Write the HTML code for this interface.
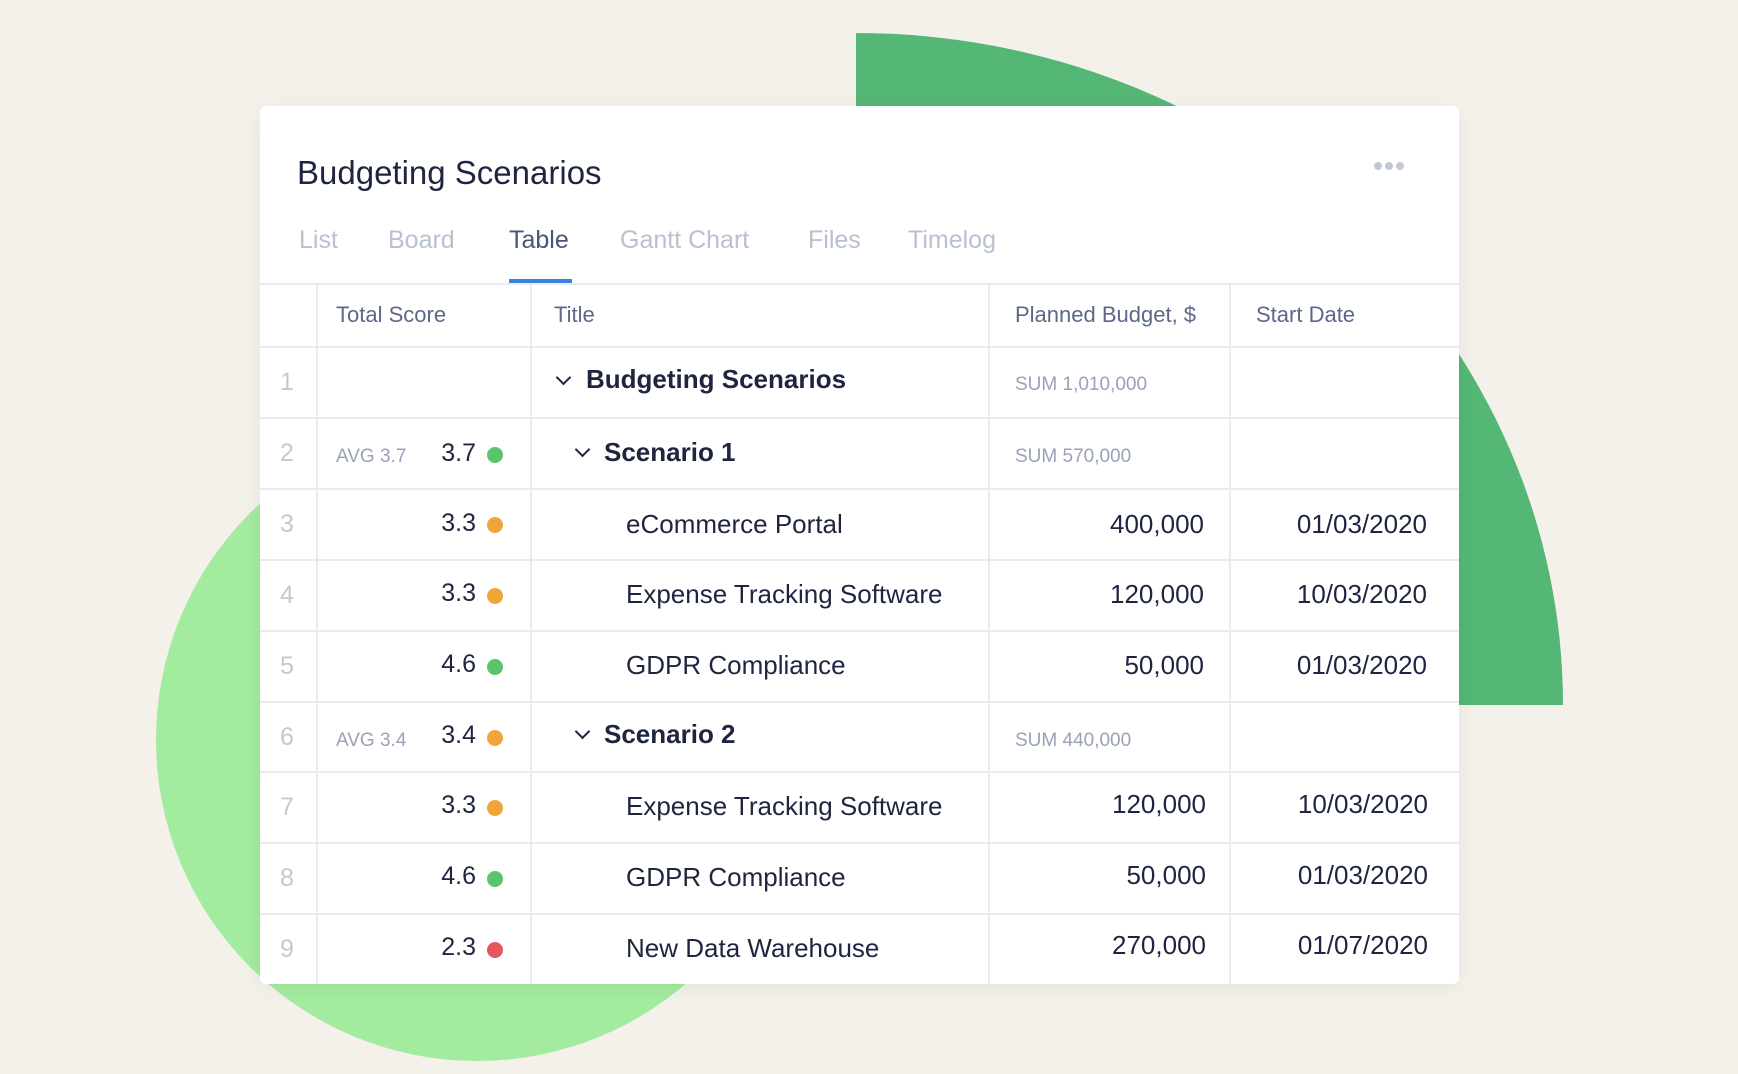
<!DOCTYPE html>
<html><head><meta charset="utf-8"><style>
*{margin:0;padding:0;box-sizing:border-box}
body{width:1738px;height:1074px;background:#f4f1eb;position:relative;overflow:hidden;font-family:"Liberation Sans",sans-serif;color:#1f2540}
.dg{position:absolute;left:856px;top:33px;width:707px;height:672px;background:#55b776;border-top-right-radius:707px 672px}
.lg{position:absolute;left:156px;top:419px;width:642px;height:642px;border-radius:50%;background:#a3eb9f}
.card{position:absolute;left:260px;top:106px;width:1199px;height:878px;background:#fff;border-radius:6px;box-shadow:0 4px 20px rgba(0,0,0,.06)}
.a{position:absolute;white-space:nowrap}
.h1{left:37px;top:48px;font-size:33px;color:#1f2540}
.tab{top:120px;font-size:25px;color:#b9c0d0}
.vl{position:absolute;top:177px;bottom:0;width:2px;background:#e8ebf1}
.hl{position:absolute;left:0;right:0;height:2px;background:#e8ebf1}
.th{font-size:22px;color:#5d6888}
.num{font-size:25px;color:#c3c8d5}
.avg{font-size:19px;color:#9aa2b8}
.sc{font-size:25px;text-align:right;width:80px}
.dot{position:absolute;width:16px;height:16px;border-radius:50%}
.t{font-size:26px}
.b{font-weight:bold;font-size:26px}
.sum{font-size:19px;color:#9aa2b8}
.r{text-align:right}
.chev{position:absolute;width:11px;height:11px;border-right:2px solid #1f2540;border-bottom:2px solid #1f2540;transform:rotate(45deg)}
</style></head><body>
<div class="dg"></div>
<div class="lg"></div>
<div class="card">
<div class="a h1">Budgeting Scenarios</div>
<div class="a" style="left:1114px;top:56px;font-size:0">
<span style="display:inline-block;width:8px;height:8px;border-radius:50%;background:#c3c8d5;margin-right:3px"></span><span style="display:inline-block;width:8px;height:8px;border-radius:50%;background:#c3c8d5;margin-right:3px"></span><span style="display:inline-block;width:8px;height:8px;border-radius:50%;background:#c3c8d5"></span></div>
<div class="a tab" style="left:39px">List</div>
<div class="a tab" style="left:128px">Board</div>
<div class="a tab" style="left:249px;color:#4a5578">Table</div>
<div class="a tab" style="left:360px">Gantt Chart</div>
<div class="a tab" style="left:548px">Files</div>
<div class="a tab" style="left:648px">Timelog</div>
<div class="a" style="left:249px;top:173px;width:63px;height:4px;background:#3b82e0"></div>
<div class="hl" style="top:177px"></div>
<div class="vl" style="left:56px"></div>
<div class="vl" style="left:270px"></div>
<div class="vl" style="left:728px"></div>
<div class="vl" style="left:969px"></div>
<div class="hl" style="top:240px"></div>
<div class="hl" style="top:311px"></div>
<div class="hl" style="top:382px"></div>
<div class="hl" style="top:453px"></div>
<div class="hl" style="top:524px"></div>
<div class="hl" style="top:595px"></div>
<div class="hl" style="top:665px"></div>
<div class="hl" style="top:736px"></div>
<div class="hl" style="top:807px"></div>
<div class="a th" style="left:76px;top:196px">Total Score</div>
<div class="a th" style="left:294px;top:196px">Title</div>
<div class="a th" style="left:755px;top:196px">Planned Budget, $</div>
<div class="a th" style="left:996px;top:196px">Start Date</div>

<div class="a num" style="left:20px;top:262px">1</div>
<div class="chev" style="left:298px;top:266px"></div>
<div class="a b" style="left:326px;top:258px">Budgeting Scenarios</div>
<div class="a sum" style="left:755px;top:268px">SUM 1,010,000</div>

<div class="a num" style="left:20px;top:333px">2</div>
<div class="a avg" style="left:76px;top:340px">AVG 3.7</div>
<div class="a sc" style="left:136px;top:333px">3.7</div>
<div class="dot" style="left:227px;top:341px;background:#5ac46a"></div>
<div class="chev" style="left:317px;top:338px"></div>
<div class="a b" style="left:344px;top:331px">Scenario 1</div>
<div class="a sum" style="left:755px;top:340px">SUM 570,000</div>

<div class="a num" style="left:20px;top:404px">3</div>
<div class="a sc" style="left:136px;top:403px">3.3</div>
<div class="dot" style="left:227px;top:411px;background:#f0a53a"></div>
<div class="a t" style="left:366px;top:403px">eCommerce Portal</div>
<div class="a t r" style="left:744px;width:200px;top:403px">400,000</div>
<div class="a t r" style="left:980px;width:187px;top:403px">01/03/2020</div>

<div class="a num" style="left:20px;top:475px">4</div>
<div class="a sc" style="left:136px;top:473px">3.3</div>
<div class="dot" style="left:227px;top:482px;background:#f0a53a"></div>
<div class="a t" style="left:366px;top:473px">Expense Tracking Software</div>
<div class="a t r" style="left:744px;width:200px;top:473px">120,000</div>
<div class="a t r" style="left:980px;width:187px;top:473px">10/03/2020</div>

<div class="a num" style="left:20px;top:546px">5</div>
<div class="a sc" style="left:136px;top:544px">4.6</div>
<div class="dot" style="left:227px;top:553px;background:#5ac46a"></div>
<div class="a t" style="left:366px;top:544px">GDPR Compliance</div>
<div class="a t r" style="left:744px;width:200px;top:544px">50,000</div>
<div class="a t r" style="left:980px;width:187px;top:544px">01/03/2020</div>

<div class="a num" style="left:20px;top:617px">6</div>
<div class="a avg" style="left:76px;top:624px">AVG 3.4</div>
<div class="a sc" style="left:136px;top:615px">3.4</div>
<div class="dot" style="left:227px;top:624px;background:#f0a53a"></div>
<div class="chev" style="left:317px;top:620px"></div>
<div class="a b" style="left:344px;top:613px">Scenario 2</div>
<div class="a sum" style="left:755px;top:624px">SUM 440,000</div>

<div class="a num" style="left:20px;top:687px">7</div>
<div class="a sc" style="left:136px;top:685px">3.3</div>
<div class="dot" style="left:227px;top:694px;background:#f0a53a"></div>
<div class="a t" style="left:366px;top:685px">Expense Tracking Software</div>
<div class="a t r" style="left:744px;width:202px;top:683px">120,000</div>
<div class="a t r" style="left:980px;width:188px;top:683px">10/03/2020</div>

<div class="a num" style="left:20px;top:758px">8</div>
<div class="a sc" style="left:136px;top:756px">4.6</div>
<div class="dot" style="left:227px;top:765px;background:#5ac46a"></div>
<div class="a t" style="left:366px;top:756px">GDPR Compliance</div>
<div class="a t r" style="left:744px;width:202px;top:754px">50,000</div>
<div class="a t r" style="left:980px;width:188px;top:754px">01/03/2020</div>

<div class="a num" style="left:20px;top:829px">9</div>
<div class="a sc" style="left:136px;top:827px">2.3</div>
<div class="dot" style="left:227px;top:836px;background:#e5575f"></div>
<div class="a t" style="left:366px;top:827px">New Data Warehouse</div>
<div class="a t r" style="left:744px;width:202px;top:824px">270,000</div>
<div class="a t r" style="left:980px;width:188px;top:824px">01/07/2020</div>
</div>
</body></html>
